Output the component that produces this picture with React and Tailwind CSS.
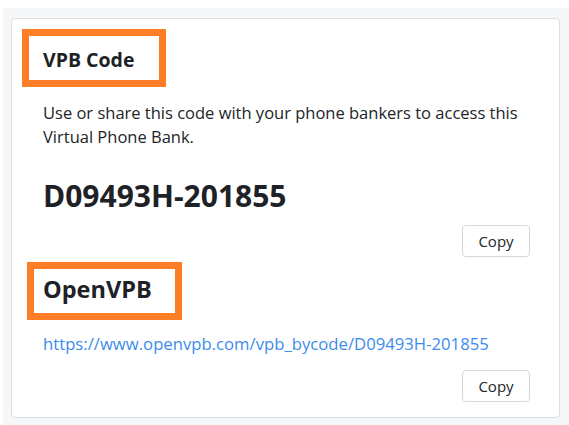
import React from 'react';

const Mark = ({ className }) => (
  <span className={`pointer-events-none absolute border-[7px] border-[#fd7e26] ${className}`} />
);

const CopyButton = ({ value }) => (
  <button
    onClick={() => navigator.clipboard && navigator.clipboard.writeText(value)}
    className="h-8 w-[68px] rounded border border-[#d4d8dd] bg-white text-[15px] leading-5 text-[#212529] hover:bg-gray-50"
  >
    Copy
  </button>
);

export default function App() {
  const code = 'D09493H-201855';
  const url = `https://www.openvpb.com/vpb_bycode/${code}`;

  return (
    <div className="min-h-screen bg-white pl-[3px] pt-2" style={{ fontFamily: '"Open Sans", "Noto Sans", sans-serif' }}>
      <div className="min-h-[417px] bg-[#f6f7f9] pl-2 pr-[9px] pt-[10px] pb-[6px]">
        <div className="rounded border border-[#dcdfe4] bg-white pl-[31px] pr-[29px] pt-[29px] pb-[15px] text-[#212529]">
          {/* VPB Code */}
          <div className="relative inline-block">
            <Mark className="-left-[21px] -right-[32px] -top-[19px] -bottom-[15px]" />
            <h2 className="text-[19.5px] font-bold leading-6 text-[#1e2227]">VPB Code</h2>
          </div>
          <p className="mt-[28px] text-[16.5px] leading-6">
            Use or share this code with your phone bankers to access this Virtual Phone Bank.
          </p>
          <div className="mt-[29px] text-[30px] font-bold leading-9 text-[#1e2227]">{code}</div>
          <div className="mt-[11px] flex justify-end">
            <CopyButton value={code} />
          </div>

          {/* OpenVPB */}
          <div className="relative mt-4 inline-block">
            <Mark className="-left-[16px] -right-[30px] -top-[11px] -bottom-[15px]" />
            <h2 className="text-[23.5px] font-bold leading-8 text-[#1e2227]">OpenVPB</h2>
          </div>
          <div className="mt-[27px] text-[16.7px] leading-6">
            <a href={url} className="text-[#3d8bec]">{url}</a>
          </div>
          <div className="mt-[14px] flex justify-end">
            <CopyButton value={url} />
          </div>
        </div>
      </div>
    </div>
  );
}
